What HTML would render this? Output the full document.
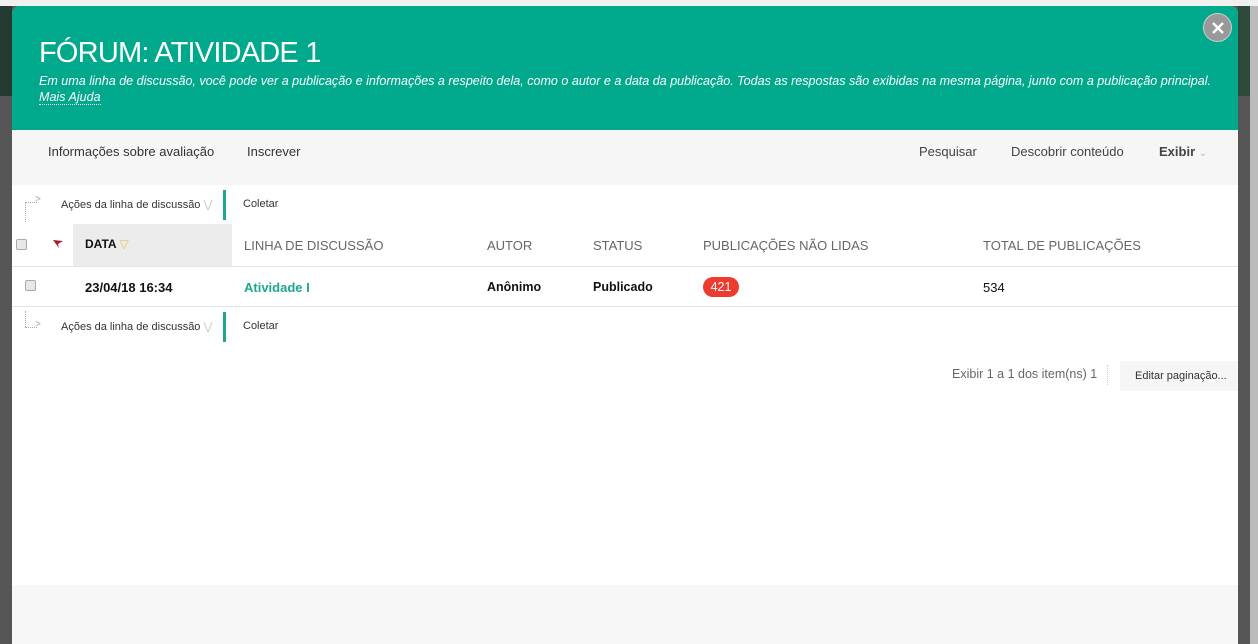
<!DOCTYPE html>
<html><head><meta charset="utf-8"><style>
*{margin:0;padding:0;box-sizing:border-box}
body{width:1258px;height:644px;overflow:hidden;position:relative;background:#555;font-family:"Liberation Sans","DejaVu Sans",sans-serif;}
.abs{position:absolute}
.t{position:absolute;white-space:nowrap;font-size:12px;color:#333}
</style></head><body>
<div class="abs" style="left:0;top:0;width:1258px;height:6px;background:#f0f0f0"></div>
<div class="abs" style="left:0;top:6px;width:12px;height:90px;background:#243a30"></div>
<div class="abs" style="left:1238px;top:6px;width:12px;height:90px;background:#2d4a3a"></div>
<div class="abs" style="left:1250px;top:6px;width:8px;height:638px;background:#bbb"></div>
<div class="abs" style="left:12px;top:6px;width:1226px;height:638px;background:#fff;border-radius:8px 8px 0 0;overflow:hidden">
 <div class="abs" style="left:0;top:0;width:1226px;height:124px;background:#00a88c"></div>
 <div class="t" style="left:27px;top:31px;font-size:29px;color:#fff;letter-spacing:-0.8px">FÓRUM: ATIVIDADE 1</div>
 <div class="t" style="left:27px;top:68px;font-size:12.55px;color:#fff;font-style:italic">Em uma linha de discussão, você pode ver a publicação e informações a respeito dela, como o autor e a data da publicação. Todas as respostas são exibidas na mesma página, junto com a publicação principal.</div>
 <div class="t" style="left:27px;top:84px;font-size:12.55px;color:#fff;font-style:italic;border-bottom:1px dotted #fff;line-height:14px">Mais Ajuda</div>
 <div class="abs" style="left:1191px;top:7px;width:29px;height:29px;border-radius:50%;background:#999;border:1px solid #ccc"></div>
 <svg class="abs" style="left:1198px;top:14px" width="16" height="16"><path d="M3 3L13 13M13 3L3 13" stroke="#fff" stroke-width="2.4"/></svg>
 <div class="abs" style="left:0;top:124px;width:1226px;height:55px;background:#f6f6f6"></div>
 <div class="t" style="left:36px;top:138px;font-size:13px">Informações sobre avaliação</div>
 <div class="t" style="left:235px;top:138px;font-size:13px">Inscrever</div>
 <div class="t" style="left:907px;top:138px;font-size:13px;color:#444">Pesquisar</div>
 <div class="t" style="left:999px;top:138px;font-size:13px;color:#444">Descobrir conteúdo</div>
 <div class="t" style="left:1147px;top:138px;font-size:13px;font-weight:bold;color:#444">Exibir <span style="color:#bbb;font-weight:normal;font-size:10px">&#8964;</span></div>
 <div class="abs" style="left:13px;top:196px;width:1px;height:20px;border-left:1px dotted #aaa"></div>
 <div class="abs" style="left:13px;top:196px;width:12px;height:1px;border-top:1px dotted #aaa"></div>
 <div class="t" style="left:23px;top:188px;color:#aaa;font-size:10px">&gt;</div>
 <div class="t" style="left:49px;top:192px;font-size:11px">Ações da linha de discussão <span style="color:#ccc">&#8897;</span></div>
 <div class="abs" style="left:211px;top:184px;width:3px;height:30px;background:#1ea78c"></div>
 <div class="t" style="left:231px;top:192px;font-size:11px">Coletar</div>
 <div class="abs" style="left:61px;top:218px;width:159px;height:42px;background:#ececec"></div>
 <div class="abs" style="left:4px;top:233px;width:11px;height:11px;border:1px solid #aaa;border-radius:2px;background:#e8e8e8"></div>
 <svg class="abs" style="left:40px;top:233px" width="12" height="10"><path d="M1 1L11 2L6 5L7 9Z" fill="#a02030"/></svg>
 <div class="t" style="left:73px;top:231px;font-weight:bold;font-size:12px;color:#111">DATA <span style="color:#e8c060;font-weight:normal">&#9661;</span></div>
 <div class="t" style="left:232px;top:232px;font-size:13px;color:#666">LINHA DE DISCUSSÃO</div>
 <div class="t" style="left:475px;top:232px;font-size:13px;color:#666">AUTOR</div>
 <div class="t" style="left:581px;top:232px;font-size:13px;color:#666">STATUS</div>
 <div class="t" style="left:691px;top:232px;font-size:13px;color:#666">PUBLICAÇÕES NÃO LIDAS</div>
 <div class="t" style="left:971px;top:232px;font-size:13px;color:#666">TOTAL DE PUBLICAÇÕES</div>
 <div class="abs" style="left:0;top:260px;width:1226px;height:1px;background:#e4e4e4"></div>
 <div class="abs" style="left:13px;top:274px;width:11px;height:11px;border:1px solid #aaa;border-radius:2px;background:#e8e8e8"></div>
 <div class="t" style="left:73px;top:274px;font-size:13px;color:#111;font-weight:bold">23/04/18 16:34</div>
 <div class="t" style="left:232px;top:274px;font-size:13px;font-weight:bold;color:#1ea78c">Atividade I</div>
 <div class="t" style="left:475px;top:274px;font-size:12.5px;font-weight:bold;color:#111">Anônimo</div>
 <div class="t" style="left:581px;top:274px;font-size:12.5px;font-weight:bold;color:#111">Publicado</div>
 <div class="abs" style="left:691px;top:271px;width:36px;height:20px;border-radius:10px;background:#ef3b2e;color:#fff;font-size:12.5px;text-align:center;line-height:20px">421</div>
 <div class="t" style="left:971px;top:274px;font-size:13px;color:#111">534</div>
 <div class="abs" style="left:0;top:300px;width:1226px;height:1px;background:#e4e4e4"></div>
 <div class="abs" style="left:13px;top:305px;width:1px;height:16px;border-left:1px dotted #aaa"></div>
 <div class="abs" style="left:13px;top:321px;width:12px;height:1px;border-top:1px dotted #aaa"></div>
 <div class="t" style="left:23px;top:313px;color:#aaa;font-size:10px">&gt;</div>
 <div class="t" style="left:49px;top:314px;font-size:11px">Ações da linha de discussão <span style="color:#ccc">&#8897;</span></div>
 <div class="abs" style="left:211px;top:306px;width:3px;height:30px;background:#1ea78c"></div>
 <div class="t" style="left:231px;top:314px;font-size:11px">Coletar</div>
 <div class="t" style="left:940px;top:361px;font-size:12.5px;color:#666">Exibir 1 a 1 dos item(ns) 1</div>
 <div class="abs" style="left:1095px;top:359px;width:1px;height:20px;border-left:1px dotted #ccc"></div>
 <div class="abs" style="left:1108px;top:355px;width:118px;height:30px;background:#f6f6f6"></div>
 <div class="t" style="left:1123px;top:364px;font-size:11px">Editar paginação...</div>
 <div class="abs" style="left:0;top:579px;width:1226px;height:60px;background:#f7f7f7"></div>
</div>
</body></html>
